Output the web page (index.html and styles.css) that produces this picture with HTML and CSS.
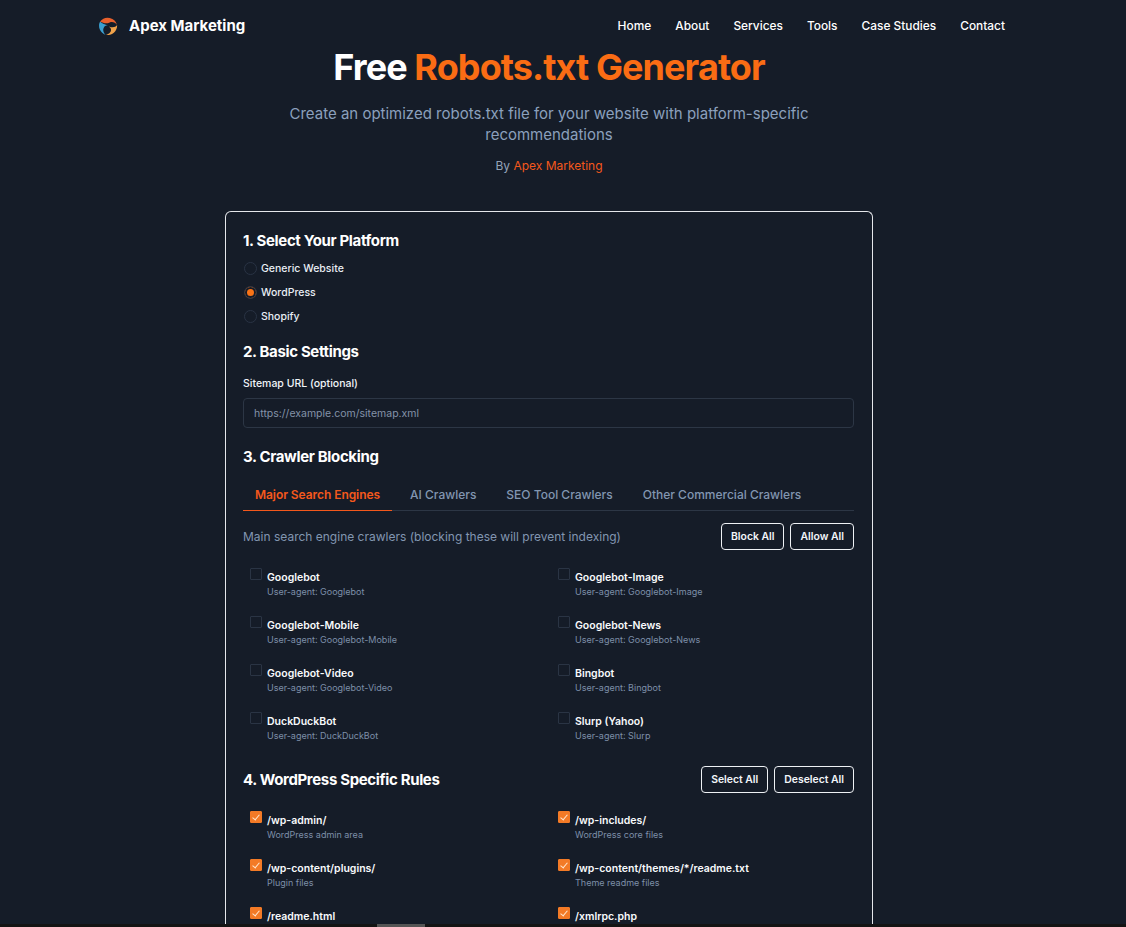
FILE: index.html
```html
<!DOCTYPE html>
<html lang="en">
<head>
    <meta charset="UTF-8">
    <meta name="viewport" content="width=device-width, initial-scale=1.0">
    <title>Free Robots.txt Generator</title>
    <link rel="stylesheet" href="styles.css">
</head>
<body>
    <header class="nav">
        <a class="brand" href="#">
            <svg class="logo" viewBox="0 0 24 24" width="21" height="21">
                <path d="M3.5 7.5 A11 11 0 0 0 10 22.8 C7.5 20.5 6.5 17.5 7.5 15 C8.5 12.5 10.5 11.5 12.5 11.8 C9.5 11 6 10 3.5 7.5Z" fill="#3a9fd0"/>
                <path d="M3.5 7.5 A11 11 0 0 1 23 11.5 C21 8.5 17.5 7 14.5 8.5 C11.5 10 8 10 3.5 7.5Z" fill="#e8602c"/>
                <path d="M23 11.5 A11 11 0 0 1 10 22.8 C13 22 16 20 16 17 C16 15 15 14 13.5 13 C17 14.5 21 14.5 23 11.5Z" fill="#f0a24a"/>
            </svg>
            <span>Apex Marketing</span>
        </a>
        <nav class="nav-links">
            <a href="#">Home</a>
            <a href="#">About</a>
            <a href="#">Services</a>
            <a href="#">Tools</a>
            <a href="#">Case Studies</a>
            <a href="#">Contact</a>
        </nav>
    </header>

    <section class="hero">
        <h1>Free <span class="accent">Robots.txt Generator</span></h1>
        <p class="lead">Create an optimized robots.txt file for your website with platform-specific recommendations</p>
        <p class="byline">By <a href="#">Apex Marketing</a></p>
    </section>

    <main class="card">
        <h2>1. Select Your Platform</h2>
        <div class="radios">
            <label class="radio"><input type="radio" name="platform"><span>Generic Website</span></label>
            <label class="radio"><input type="radio" name="platform" checked><span>WordPress</span></label>
            <label class="radio"><input type="radio" name="platform"><span>Shopify</span></label>
        </div>

        <h2 class="gap-basic">2. Basic Settings</h2>
        <label class="field-label" for="sitemap">Sitemap URL (optional)</label>
        <input class="text-input" id="sitemap" type="text" placeholder="https://example.com/sitemap.xml">

        <h2 class="gap-crawl">3. Crawler Blocking</h2>
        <div class="tabs">
            <a class="tab active" href="#">Major Search Engines</a>
            <a class="tab" href="#">AI Crawlers</a>
            <a class="tab" href="#">SEO Tool Crawlers</a>
            <a class="tab" href="#">Other Commercial Crawlers</a>
        </div>
        <div class="tab-head">
            <p>Main search engine crawlers (blocking these will prevent indexing)</p>
            <div class="btns">
                <button type="button">Block All</button>
                <button type="button">Allow All</button>
            </div>
        </div>
        <div class="checks">
            <label class="check"><input type="checkbox"><span class="check-text"><b>Googlebot</b><small>User-agent: Googlebot</small></span></label>
            <label class="check"><input type="checkbox"><span class="check-text"><b>Googlebot-Image</b><small>User-agent: Googlebot-Image</small></span></label>
            <label class="check"><input type="checkbox"><span class="check-text"><b>Googlebot-Mobile</b><small>User-agent: Googlebot-Mobile</small></span></label>
            <label class="check"><input type="checkbox"><span class="check-text"><b>Googlebot-News</b><small>User-agent: Googlebot-News</small></span></label>
            <label class="check"><input type="checkbox"><span class="check-text"><b>Googlebot-Video</b><small>User-agent: Googlebot-Video</small></span></label>
            <label class="check"><input type="checkbox"><span class="check-text"><b>Bingbot</b><small>User-agent: Bingbot</small></span></label>
            <label class="check"><input type="checkbox"><span class="check-text"><b>DuckDuckBot</b><small>User-agent: DuckDuckBot</small></span></label>
            <label class="check"><input type="checkbox"><span class="check-text"><b>Slurp (Yahoo)</b><small>User-agent: Slurp</small></span></label>
        </div>

        <div class="section-head">
            <h2>4. WordPress Specific Rules</h2>
            <div class="btns">
                <button type="button">Select All</button>
                <button type="button">Deselect All</button>
            </div>
        </div>
        <div class="checks">
            <label class="check"><input type="checkbox" checked><span class="check-text"><b>/wp-admin/</b><small>WordPress admin area</small></span></label>
            <label class="check"><input type="checkbox" checked><span class="check-text"><b>/wp-includes/</b><small>WordPress core files</small></span></label>
            <label class="check"><input type="checkbox" checked><span class="check-text"><b>/wp-content/plugins/</b><small>Plugin files</small></span></label>
            <label class="check"><input type="checkbox" checked><span class="check-text"><b>/wp-content/themes/*/readme.txt</b><small>Theme readme files</small></span></label>
            <label class="check"><input type="checkbox" checked><span class="check-text"><b>/readme.html</b></span></label>
            <label class="check"><input type="checkbox" checked><span class="check-text"><b>/xmlrpc.php</b></span></label>
        </div>
    </main>

    <div class="bottom-strip"><span class="bottom-thumb"></span></div>
</body>
</html>
```

FILE: styles.css
```css
* { box-sizing: border-box; }
html, body { height: 927px; overflow: hidden; }
body { margin: 0; background: #151c28; color: #fff; font-family: Inter, "Liberation Sans", sans-serif; position: relative; }
a { color: inherit; text-decoration: none; }

.nav { display: flex; justify-content: space-between; align-items: center; height: 51px; padding: 0 121px 0 97px; }
.brand { display: flex; align-items: center; gap: 11px; font-size: 15px; font-weight: 700; }
.logo { display: block; }
.nav-links { display: flex; gap: 24px; font-size: 11.9px; font-weight: 500; }

.hero { width: 1098px; padding-top: 1px; text-align: center; }
h1 { margin: 0; font-size: 36px; line-height: 30px; font-weight: 700; letter-spacing: -0.9px; }
.accent { color: #fa6c14; }
.lead { width: 560px; margin: 21px auto 0; font-size: 15px; line-height: 21px; color: #8ba0bd; }
.byline { margin: 12px 0 0; font-size: 12px; line-height: 18px; color: #94a3b8; }
.byline a { color: #f4581c; }

.card { width: 648px; height: 713px; margin: 36px 0 0 225px; padding: 19px 18px 0 17px; border: 1px solid #e5e7eb; border-bottom: 0; border-radius: 6px 6px 0 0; overflow: hidden; }
h2 { margin: 0; font-size: 15px; line-height: 20px; font-weight: 700; letter-spacing: -0.35px; }

.radios { display: flex; flex-direction: column; margin-top: 5px; padding-left: 1px; }
.radio { display: flex; align-items: center; gap: 4px; height: 24px; font-size: 10.5px; font-weight: 500; color: #e8edf4; }
.radio input { appearance: none; width: 13px; height: 13px; margin: 0; border: 1px solid #293344; border-radius: 50%; background: #151c28; }
.radio input:checked { background: #f97316; box-shadow: inset 0 0 0 2px #151c28; border-color: #2a3444; }

.gap-basic { margin-top: 14px; }
.field-label { display: block; margin-top: 14px; font-size: 10.5px; line-height: 16px; font-weight: 500; color: #f1f5f9; }
.text-input { display: block; width: 100%; height: 30px; margin-top: 6px; padding: 0 10px; background: #151c28; border: 1px solid #2c3645; border-radius: 4px; font: 10.5px Inter, "Liberation Sans", sans-serif; color: #e8edf4; }
.text-input::placeholder { color: #8493a8; opacity: 1; }

.gap-crawl { margin-top: 19px; }
.tabs { display: flex; margin-top: 9px; border-bottom: 1px solid #2c3645; }
.tab { padding: 11px 12px 8px; margin-right: 6px; margin-bottom: -1px; font-size: 12px; line-height: 15px; font-weight: 500; color: #8296b1; }
.tab.active { color: #f4581c; font-weight: 600; letter-spacing: -0.06px; border-bottom: 1px solid #f4581c; }

.tab-head { display: flex; justify-content: space-between; align-items: center; margin-top: 12px; }
.tab-head p { margin: 0; font-size: 12px; color: #8296b1; }
.btns { display: flex; gap: 6px; }
button { height: 27px; padding: 0 9px; background: #151c28; border: 1px solid #eef1f5; border-radius: 4px; color: #f1f5f9; font: 600 10.4px Inter, "Liberation Sans", sans-serif; }

.checks { display: grid; grid-template-columns: 308px 1fr; row-gap: 14px; margin-top: 17px; padding-left: 7px; }
.check { display: flex; align-items: flex-start; gap: 5px; height: 34px; }
.check input { appearance: none; width: 12px; height: 12px; margin: 1px 0 0; border: 1px solid #2a3444; border-radius: 1px; background: #151c28; position: relative; flex: none; }
.check input:checked { background: #f37a26; border-color: #f37a26; }
.check input:checked::after { content: ""; position: absolute; left: 3px; top: 1px; width: 3px; height: 6px; border: solid #ffe6cf; border-width: 0 1px 1px 0; transform: rotate(40deg); }
.check-text { display: flex; flex-direction: column; padding-top: 3px; }
.check-text b { font-size: 10.5px; line-height: 15px; font-weight: 600; color: #f8fafc; }
.check-text small { font-size: 9px; line-height: 14px; color: #7d8fa8; }

.section-head { display: flex; justify-content: space-between; align-items: center; margin-top: 21px; }

.bottom-strip { position: absolute; left: 0; right: 0; bottom: 0; height: 3px; background: #141414; }
.bottom-thumb { position: absolute; left: 377px; top: 0; width: 48px; height: 3px; background: #555; }
```
